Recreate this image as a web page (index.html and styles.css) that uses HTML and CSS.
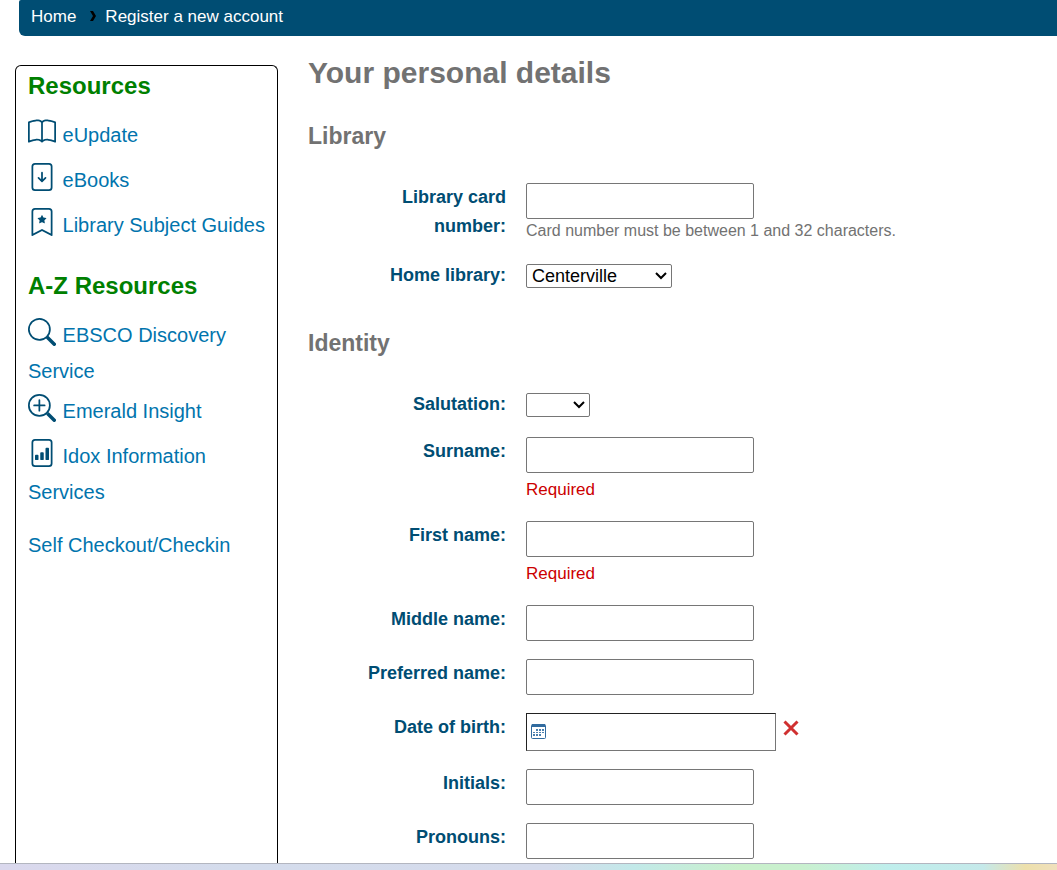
FILE: index.html
```html
<!DOCTYPE html>
<html lang="en">
<head>
<meta charset="utf-8">
<meta name="viewport" content="width=device-width, initial-scale=1">
<title>Register a new account</title>
<link rel="stylesheet" href="styles.css">
</head>
<body>
<nav class="breadcrumb" aria-label="Breadcrumb">
  <a href="#">Home</a>
  <svg class="crumb-sep" viewBox="0 0 8 10" aria-hidden="true"><path d="M1 0h3l3 5-3 5H1l3-5z"/></svg>
  <a href="#" aria-current="page">Register a new account</a>
</nav>

<div class="page">
  <aside class="sidebar">
    <h2 class="side-title">Resources</h2>
    <ul class="side-list">
      <li><a href="#"><svg class="icon" viewBox="0 0 16 16" aria-hidden="true"><path d="M1 2.828c.885-.37 2.154-.769 3.388-.893 1.33-.134 2.458.063 3.112.752v9.746c-.935-.53-2.12-.603-3.213-.493-1.18.12-2.37.461-3.287.811V2.828zm7.5-.141c.654-.689 1.782-.886 3.112-.752 1.234.124 2.503.523 3.388.893v9.923c-.918-.35-2.107-.692-3.287-.81-1.094-.111-2.278-.039-3.213.492V2.687zM8 1.783C7.015.936 5.587.81 4.287.94c-1.514.153-3.042.672-3.994 1.105A.5.5 0 0 0 0 2.5v11a.5.5 0 0 0 .707.455c.882-.4 2.303-.881 3.68-1.02 1.409-.142 2.59.087 3.223.877a.5.5 0 0 0 .78 0c.633-.79 1.814-1.019 3.222-.877 1.378.139 2.8.62 3.681 1.02A.5.5 0 0 0 16 13.5v-11a.5.5 0 0 0-.293-.455c-.952-.433-2.48-.952-3.994-1.105C10.413.809 8.985.936 8 1.783z"/></svg> eUpdate</a></li>
      <li><a href="#"><svg class="icon" viewBox="0 0 16 16" aria-hidden="true"><path d="M8 5a.5.5 0 0 1 .5.5v3.793l1.146-1.147a.5.5 0 0 1 .708.708l-2 2a.5.5 0 0 1-.708 0l-2-2a.5.5 0 1 1 .708-.708L7.5 9.293V5.5A.5.5 0 0 1 8 5z"/><path d="M4 0a2 2 0 0 0-2 2v12a2 2 0 0 0 2 2h8a2 2 0 0 0 2-2V2a2 2 0 0 0-2-2H4zm0 1h8a1 1 0 0 1 1 1v12a1 1 0 0 1-1 1H4a1 1 0 0 1-1-1V2a1 1 0 0 1 1-1z"/></svg> eBooks</a></li>
      <li><a href="#"><svg class="icon" viewBox="0 0 16 16" aria-hidden="true"><path d="M7.84 4.1a.178.178 0 0 1 .32 0l.634 1.285a.178.178 0 0 0 .134.098l1.42.206c.145.021.204.2.098.303L9.42 6.993a.178.178 0 0 0-.051.158l.242 1.414a.178.178 0 0 1-.258.187l-1.27-.668a.178.178 0 0 0-.165 0l-1.27.668a.178.178 0 0 1-.257-.187l.242-1.414a.178.178 0 0 0-.05-.158l-1.03-1.001a.178.178 0 0 1 .098-.303l1.42-.206a.178.178 0 0 0 .134-.098L7.84 4.1z"/><path d="M2 2a2 2 0 0 1 2-2h8a2 2 0 0 1 2 2v13.5a.5.5 0 0 1-.777.416L8 13.101l-5.223 2.815A.5.5 0 0 1 2 15.5V2zm2-1a1 1 0 0 0-1 1v12.566l4.723-2.482a.5.5 0 0 1 .554 0L13 14.566V2a1 1 0 0 0-1-1H4z"/></svg> Library Subject Guides</a></li>
    </ul>
    <h2 class="side-title">A-Z Resources</h2>
    <ul class="side-list">
      <li class="tight"><a href="#"><svg class="icon" viewBox="0 0 16 16" aria-hidden="true"><path d="M11.742 10.344a6.5 6.5 0 1 0-1.397 1.398h-.001c.03.04.062.078.098.115l3.85 3.85a1 1 0 0 0 1.415-1.414l-3.85-3.85a1.007 1.007 0 0 0-.115-.1zM12 6.5a5.5 5.5 0 1 1-11 0 5.5 5.5 0 0 1 11 0z"/></svg> EBSCO Discovery Service</a></li>
      <li><a href="#"><svg class="icon" viewBox="0 0 16 16" aria-hidden="true"><path fill-rule="evenodd" d="M6.5 12a5.5 5.5 0 1 0 0-11 5.5 5.5 0 0 0 0 11zM13 6.5a6.5 6.5 0 1 1-13 0 6.5 6.5 0 0 1 13 0z"/><path d="M10.344 11.742c.03.04.062.078.098.115l3.85 3.85a1 1 0 0 0 1.415-1.414l-3.85-3.85a1.007 1.007 0 0 0-.115-.1 6.538 6.538 0 0 1-1.398 1.4z"/><path fill-rule="evenodd" d="M6.5 3a.5.5 0 0 1 .5.5V6h2.500a.5.5 0 0 1 0 1H7v2.500a.5.5 0 0 1-1 0V7H3.500a.5.5 0 0 1 0-1H6V3.500a.5.5 0 0 1 .5-.5z"/></svg> Emerald Insight</a></li>
      <li><a href="#"><svg class="icon" viewBox="0 0 16 16" aria-hidden="true"><path d="M4 0a2 2 0 0 0-2 2v12a2 2 0 0 0 2 2h8a2 2 0 0 0 2-2V2a2 2 0 0 0-2-2H4zm0 1h8a1 1 0 0 1 1 1v12a1 1 0 0 1-1 1H4a1 1 0 0 1-1-1V2a1 1 0 0 1 1-1z"/><path d="M10 5.500a.5.5 0 0 1 .5-.5h1a.5.5 0 0 1 .5.5v6a.5.5 0 0 1-.5.5h-1a.5.5 0 0 1-.5-.5zM7 8a.5.5 0 0 1 .5-.5h1a.5.5 0 0 1 .5.5v3.500a.5.5 0 0 1-.5.5h-1a.5.5 0 0 1-.5-.5zM4 9.500a.5.5 0 0 1 .5-.5h1a.5.5 0 0 1 .5.5v2a.5.5 0 0 1-.5.5h-1a.5.5 0 0 1-.5-.5z"/></svg> Idox Information Services</a></li>
    </ul>
    <p class="side-link"><a href="#">Self Checkout/Checkin</a></p>
  </aside>

  <main class="main">
    <h1 class="title">Your personal details</h1>
    <form class="form">
      <section class="group">
        <h2 class="legend">Library</h2>
        <div class="row">
          <label class="label" for="card">Library card number:</label>
          <div class="control">
            <input class="text" id="card" type="text" aria-describedby="card-hint">
            <div class="hint" id="card-hint">Card number must be between 1 and 32 characters.</div>
          </div>
        </div>
        <div class="row row-select">
          <label class="label" for="branch">Home library:</label>
          <select class="select branch" id="branch"><option>Centerville</option></select>
        </div>
      </section>
      <section class="group">
        <h2 class="legend">Identity</h2>
        <div class="row row-select">
          <label class="label" for="salutation">Salutation:</label>
          <select class="select salutation" id="salutation"><option></option></select>
        </div>
        <div class="row">
          <label class="label" for="surname">Surname:</label>
          <div class="control">
            <input class="text" id="surname" type="text" required>
            <div class="required">Required</div>
          </div>
        </div>
        <div class="row">
          <label class="label" for="firstname">First name:</label>
          <div class="control">
            <input class="text" id="firstname" type="text" required>
            <div class="required">Required</div>
          </div>
        </div>
        <div class="row">
          <label class="label" for="middle">Middle name:</label>
          <input class="text" id="middle" type="text">
        </div>
        <div class="row">
          <label class="label" for="preferred">Preferred name:</label>
          <input class="text" id="preferred" type="text">
        </div>
        <div class="row">
          <label class="label" for="dob">Date of birth:</label>
          <div class="date-field">
            <input class="text date" id="dob" type="text">
            <button class="clear" type="button" aria-label="Clear date"><svg viewBox="0 0 16 16" aria-hidden="true"><path d="M1.500 1.500l13 13M14.500 1.500l-13 13"/></svg></button>
          </div>
        </div>
        <div class="row">
          <label class="label" for="initials">Initials:</label>
          <input class="text" id="initials" type="text">
        </div>
        <div class="row">
          <label class="label" for="pronouns">Pronouns:</label>
          <input class="text" id="pronouns" type="text">
        </div>
      </section>
    </form>
  </main>
</div>
<div class="strip"></div>
</body>
</html>
```
FILE: styles.css
```css
* { box-sizing: border-box; }

body {
  margin: 0;
  height: 100vh;
  display: flex;
  flex-direction: column;
  overflow: hidden;
  background: #fff;
  font-family: "Liberation Sans", Arial, sans-serif;
  font-size: 18px;
}

h1, h2, ul, p { margin: 0; padding: 0; }

.breadcrumb {
  flex: none;
  display: flex;
  align-items: center;
  margin-left: 19px;
  padding: 0 12px 3px;
  height: 36px;
  border-radius: 2px 0 0 6px;
  background: #004d73;
  font-size: 17px;
}
.breadcrumb a { color: #fff; text-decoration: none; }
.crumb-sep { width: 8px; height: 10px; margin: 0 8px 2px 13px; fill: #000; }

.page {
  flex: 1;
  min-height: 0;
  display: flex;
  gap: 30px;
  padding-left: 15px;
  overflow: hidden;
}

.sidebar {
  flex: none;
  width: 263px;
  margin-top: 29px;
  padding: 6px 10px 6px 12px;
  border: 1px solid #000;
  border-bottom: 0;
  border-radius: 6px 6px 0 0;
  font-size: 20px;
  line-height: 36px;
}
.sidebar a { color: #0174ad; text-decoration: none; }
.side-title {
  margin-bottom: 17px;
  color: #008000;
  font-size: 24px;
  line-height: 28px;
}
.side-list { list-style: none; }
.side-list li { margin-bottom: 9px; }
.side-list li.tight { margin-bottom: 4px; }
.side-list li:last-child { margin-bottom: 0; }
.side-list + .side-title { margin-top: 29px; }
.side-link { margin-top: 17px; }
.icon { width: 28px; height: 28px; margin-right: 1px; vertical-align: -4px; fill: #004d73; }

.main { flex: 1; min-width: 0; padding-top: 17px; }
.title { color: #727272; font-size: 30px; line-height: 40px; }
.group { margin-top: 36px; }
.group:first-child { margin-top: 26px; }
.legend {
  margin-bottom: 30px;
  color: #727272;
  font-size: 23px;
  line-height: 34px;
}

.row { display: flex; align-items: flex-start; gap: 20px; margin-bottom: 18px; }
.row:last-child { margin-bottom: 0; }
.row-select { align-items: center; }
.label {
  flex: none;
  width: 198px;
  padding-left: 40px;
  color: #004d73;
  font-weight: 700;
  line-height: 29px;
  text-align: right;
}

.text {
  display: block;
  width: 228px;
  height: 36px;
  padding: 4px;
  border: 1px solid #767676;
  border-radius: 2px;
  background: #fff;
  font: inherit;
}
.hint { color: #727272; font-size: 16px; line-height: 24px; }
.required { padding-top: 4px; color: #c00; font-size: 17px; line-height: 26px; }

.select {
  appearance: none;
  height: 24px;
  padding: 0 5px;
  border: 1px solid #767676;
  border-radius: 2px;
  background: #fff url("data:image/svg+xml,%3Csvg xmlns='http://www.w3.org/2000/svg' viewBox='0 0 12 8'%3E%3Cpath d='M1 1l5 5 5-5' fill='none' stroke='%23000' stroke-width='2'/%3E%3C/svg%3E") no-repeat right 4px center / 12px 8px;
  color: #000;
  font: inherit;
  line-height: 22px;
}
.branch { width: 146px; }
.salutation { width: 64px; }

.date-field { display: flex; align-items: flex-start; gap: 7px; }
.date {
  width: 250px;
  height: 38px;
  padding-left: 24px;
  border-color: #222 #767676 #767676 #222;
  border-radius: 0;
  background: #fff url("data:image/svg+xml,%3Csvg xmlns='http://www.w3.org/2000/svg' viewBox='0 0 15 15'%3E%3Crect x='.5' y='.5' width='14' height='14' rx='1' fill='%23fff' stroke='%23316b9f'/%3E%3Cpath d='M1 0h13v3H1z' fill='%23316b9f'/%3E%3Cpath d='M5 5h2v2H5zM8 5h2v2H8zM11 5h2v2h-2zM2 8h2v1H2zM5 8h2v1H5zM8 8h2v1H8zM11 8h2v1h-2zM2 10h2v2H2zM5 10h2v2H5zM8 10h2v2H8z' fill='%234a7fae'/%3E%3C/svg%3E") no-repeat 4px 10px / 15px 15px;
}
.clear {
  width: 16px;
  height: 16px;
  margin-top: 7px;
  padding: 0;
  border: 0;
  background: none;
}
.clear svg { display: block; width: 16px; height: 16px; fill: none; stroke: #d03030; stroke-width: 3; }

.strip {
  flex: none;
  height: 7px;
  border-top: 1px solid #b3b6c0;
  background: linear-gradient(90deg, #dad8ed 0%, #d4dcec 22%, #d5dbec 52%, #c2e9e9 60%, #c9f0cb 70%, #c9f0cf 76%, #bfeeec 84%, #c5e9ea 93%, #ede0ac 97%, #f0e0bd 100%);
}
```
